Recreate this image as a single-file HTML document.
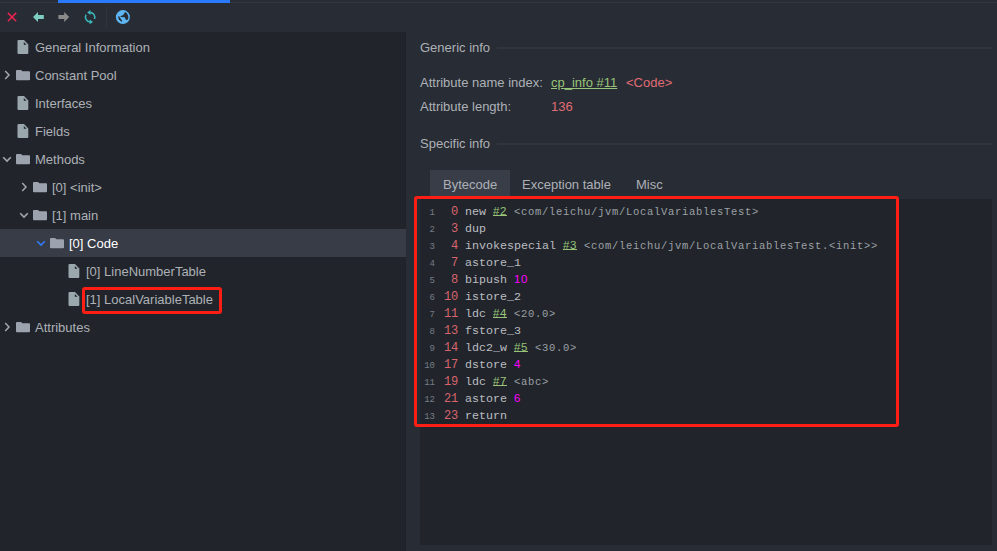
<!DOCTYPE html>
<html><head><meta charset="utf-8">
<style>
*{margin:0;padding:0;box-sizing:border-box}
html,body{width:997px;height:551px;overflow:hidden;background:#282c34;font-family:"Liberation Sans",sans-serif;font-size:13px;color:#adb1b7}
.abs{position:absolute}
#toolbar{left:0;top:0;width:997px;height:32px;background:#282c34}
#topline{left:0;top:2px;width:997px;height:1px;background:#32363f}
#bluebar{left:58px;top:0;width:172px;height:3px;background:#2a7aff}
#tree{left:0;top:32px;width:406px;height:519px;background:#21252b}
#divider{left:405px;top:32px;width:1px;height:519px;background:#1e2127}
.sel-row{left:0;top:229px;width:406px;height:28px;background:#373c47}
.txt{position:absolute;white-space:pre;line-height:16px}
.txt.sel{color:#ffffff}
.right{left:406px;top:32px;width:591px;height:519px;background:#282c34}
#code{left:420px;top:199px;width:572px;height:346px;background:#21252b}
.hdrline{position:absolute;height:2px;background:#31353f}
.tab{left:430px;top:170px;width:80px;height:27px;background:#383d48}
.cl{position:absolute;left:420px;white-space:pre;font-family:"Liberation Mono",monospace;font-size:11.67px;line-height:17px;color:#bbbdc1}
.cl .ln{display:inline-block;width:15px;text-align:right;font-size:9px;color:#767c85;margin-right:9px}
.off{color:#d9646d;font-size:12px;letter-spacing:-0.2px}
.cl span{line-height:0}
.ins{color:#bbbdc1}
.ref{color:#98c379;text-decoration:underline;text-underline-offset:0px;font-family:"Liberation Sans",sans-serif;font-size:11.5px;letter-spacing:0.6px}
.cmt{color:#9ca0a6;font-size:10.5px;letter-spacing:0.7px}
.num{color:#ff00ff;font-family:"Liberation Sans",sans-serif;font-size:11.5px;letter-spacing:0.6px}
.redbox{position:absolute;border:3px solid #ff1e14;border-radius:3px}
</style></head><body>
<div id="toolbar" class="abs"></div>
<div id="topline" class="abs"></div>
<div id="bluebar" class="abs"></div>
<svg class="abs" style="left:0;top:0" width="140" height="32" viewBox="0 0 140 32">
 <path d="M7.9 12.9 L16.2 21.2 M16.2 12.9 L7.9 21.2" stroke="#ec2450" stroke-width="1.5"/>
 <path d="M33 17 L38 12 V15.1 H43.8 V19 H38 V22z" fill="#7ecdc2"/>
 <path d="M69.2 17 L64.2 12 V15.1 H58.4 V19 H64.2 V22z" fill="#8a8a8a"/>
 <path d="M90.1 12.5 A4.7 4.7 0 0 1 94.42 19.04" fill="none" stroke="#3bbabd" stroke-width="1.5"/>
 <path d="M86.11 14.71 A4.7 4.7 0 0 0 90.1 21.9" fill="none" stroke="#3bbabd" stroke-width="1.5"/>
 <path d="M87.2 12.5 L90.5 10.1 L90.5 14.9z" fill="#3bbabd"/>
 <path d="M93 21.9 L89.7 19.5 L89.7 24.3z" fill="#3bbabd"/>
 <rect x="106" y="7" width="1" height="20" fill="#31353e"/>
 <circle cx="122.9" cy="17.1" r="7" fill="#5db6f3"/>
 <path d="M125.2 12 C126.8 12.8 128.2 14.8 128.4 17.2 C128.4 18.3 128 19.3 127.5 19.8 L126.2 19.9 C125.6 19.5 125.2 18.8 125 18 L124.8 17.2 L121 17 L120.3 16.2 L123.2 15 L124.1 13.5z" fill="#282c34"/>
 <path d="M118 16.2 L119.3 16.4 L122.2 20.9 L121.3 21.7 L118.8 19.2z" fill="#282c34"/>
</svg>
<div id="tree" class="abs"></div>
<div id="divider" class="abs"></div>
<div class="sel-row abs"></div>
<svg class="abs" style="left:0;top:0" width="406" height="551">
<path d="M18.5 40.1 h5.5 l4.3 4.4 v8.4 a1 1 0 0 1 -1 1 h-8.8 a1 1 0 0 1 -1 -1 v-11.8 a1 1 0 0 1 1 -1z" fill="#9aa8ae"/>
<path d="M23.8 41.9 v2.8 h2.8z" fill="#21252b"/>
<path d="M5.2 71.1 L9 75 L5.2 78.9" fill="none" stroke="#a3a7ae" stroke-width="1.5"/>
<path d="M17 69.9 h4 l1.4 1.3 h6.6 a1 1 0 0 1 1 1 v7.1 a1 1 0 0 1 -1 1 h-12 a1 1 0 0 1 -1 -1 v-8.4 a1 1 0 0 1 1 -1z" fill="#9da3ae"/>
<path d="M18.5 96.1 h5.5 l4.3 4.4 v8.4 a1 1 0 0 1 -1 1 h-8.8 a1 1 0 0 1 -1 -1 v-11.8 a1 1 0 0 1 1 -1z" fill="#9aa8ae"/>
<path d="M23.8 97.89999999999999 v2.8 h2.8z" fill="#21252b"/>
<path d="M18.5 124.1 h5.5 l4.3 4.4 v8.4 a1 1 0 0 1 -1 1 h-8.8 a1 1 0 0 1 -1 -1 v-11.8 a1 1 0 0 1 1 -1z" fill="#9aa8ae"/>
<path d="M23.8 125.89999999999999 v2.8 h2.8z" fill="#21252b"/>
<path d="M3.2 157.2 L7 161 L10.8 157.2" fill="none" stroke="#a3a7ae" stroke-width="1.6"/>
<path d="M17 153.9 h4 l1.4 1.3 h6.6 a1 1 0 0 1 1 1 v7.1 a1 1 0 0 1 -1 1 h-12 a1 1 0 0 1 -1 -1 v-8.4 a1 1 0 0 1 1 -1z" fill="#9da3ae"/>
<path d="M22.2 183.1 L26 187 L22.2 190.9" fill="none" stroke="#a3a7ae" stroke-width="1.5"/>
<path d="M34 181.9 h4 l1.4 1.3 h6.6 a1 1 0 0 1 1 1 v7.1 a1 1 0 0 1 -1 1 h-12 a1 1 0 0 1 -1 -1 v-8.4 a1 1 0 0 1 1 -1z" fill="#9da3ae"/>
<path d="M20.2 213.2 L24 217 L27.8 213.2" fill="none" stroke="#a3a7ae" stroke-width="1.6"/>
<path d="M34 209.9 h4 l1.4 1.3 h6.6 a1 1 0 0 1 1 1 v7.1 a1 1 0 0 1 -1 1 h-12 a1 1 0 0 1 -1 -1 v-8.4 a1 1 0 0 1 1 -1z" fill="#9da3ae"/>
<path d="M37.2 241.2 L41 245 L44.8 241.2" fill="none" stroke="#2f7df6" stroke-width="1.6"/>
<path d="M51 237.9 h4 l1.4 1.3 h6.6 a1 1 0 0 1 1 1 v7.1 a1 1 0 0 1 -1 1 h-12 a1 1 0 0 1 -1 -1 v-8.4 a1 1 0 0 1 1 -1z" fill="#9da3ae"/>
<path d="M69.5 264.1 h5.5 l4.3 4.4 v8.4 a1 1 0 0 1 -1 1 h-8.8 a1 1 0 0 1 -1 -1 v-11.8 a1 1 0 0 1 1 -1z" fill="#9aa8ae"/>
<path d="M74.8 265.90000000000003 v2.8 h2.8z" fill="#21252b"/>
<path d="M69.5 292.1 h5.5 l4.3 4.4 v8.4 a1 1 0 0 1 -1 1 h-8.8 a1 1 0 0 1 -1 -1 v-11.8 a1 1 0 0 1 1 -1z" fill="#9aa8ae"/>
<path d="M74.8 293.90000000000003 v2.8 h2.8z" fill="#21252b"/>
<path d="M5.2 323.1 L9 327 L5.2 330.9" fill="none" stroke="#a3a7ae" stroke-width="1.5"/>
<path d="M17 321.9 h4 l1.4 1.3 h6.6 a1 1 0 0 1 1 1 v7.1 a1 1 0 0 1 -1 1 h-12 a1 1 0 0 1 -1 -1 v-8.4 a1 1 0 0 1 1 -1z" fill="#9da3ae"/>
</svg>
<div class="txt" style="left:35px;top:40px">General Information</div>
<div class="txt" style="left:35px;top:68px">Constant Pool</div>
<div class="txt" style="left:35px;top:96px">Interfaces</div>
<div class="txt" style="left:35px;top:124px">Fields</div>
<div class="txt" style="left:35px;top:152px">Methods</div>
<div class="txt" style="left:52px;top:180px">[0] &lt;init&gt;</div>
<div class="txt" style="left:52px;top:208px">[1] main</div>
<div class="txt sel" style="left:69px;top:236px">[0] Code</div>
<div class="txt" style="left:86px;top:264px">[0] LineNumberTable</div>
<div class="txt" style="left:86px;top:292px">[1] LocalVariableTable</div>
<div class="txt" style="left:35px;top:320px">Attributes</div>
<div class="redbox" style="left:82px;top:287px;width:140px;height:27px"></div>
<div class="right abs"></div>
<div class="txt" style="left:420px;top:40px">Generic info</div>
<div class="hdrline" style="left:497px;top:47px;width:495px"></div>
<div class="txt" style="left:420px;top:75px">Attribute name index:</div>
<div class="txt" style="left:551px;top:75px;color:#98c379;text-decoration:underline">cp_info #11</div>
<div class="txt" style="left:626px;top:75px;color:#e06c75">&lt;Code&gt;</div>
<div class="txt" style="left:420px;top:99px">Attribute length:</div>
<div class="txt" style="left:551px;top:99px;color:#e06c75">136</div>
<div class="txt" style="left:420px;top:136px">Specific info</div>
<div class="hdrline" style="left:497px;top:143px;width:495px"></div>
<div class="tab abs"></div>
<div class="txt" style="left:443px;top:177px">Bytecode</div>
<div class="txt" style="left:522px;top:177px">Exception table</div>
<div class="txt" style="left:636px;top:177px">Misc</div>
<div id="code" class="abs"></div>
<div class="cl" style="top:204px"><span class="ln">1</span><span class="off"> 0</span> <span class="ins">new</span> <span class="ref">#2</span> <span class="cmt">&lt;com/leichu/jvm/LocalVariablesTest&gt;</span></div>
<div class="cl" style="top:221px"><span class="ln">2</span><span class="off"> 3</span> <span class="ins">dup</span></div>
<div class="cl" style="top:238px"><span class="ln">3</span><span class="off"> 4</span> <span class="ins">invokespecial</span> <span class="ref">#3</span> <span class="cmt">&lt;com/leichu/jvm/LocalVariablesTest.&lt;init&gt;&gt;</span></div>
<div class="cl" style="top:255px"><span class="ln">4</span><span class="off"> 7</span> <span class="ins">astore_1</span></div>
<div class="cl" style="top:272px"><span class="ln">5</span><span class="off"> 8</span> <span class="ins">bipush</span> <span class="num">10</span></div>
<div class="cl" style="top:289px"><span class="ln">6</span><span class="off">10</span> <span class="ins">istore_2</span></div>
<div class="cl" style="top:306px"><span class="ln">7</span><span class="off">11</span> <span class="ins">ldc</span> <span class="ref">#4</span> <span class="cmt">&lt;20.0&gt;</span></div>
<div class="cl" style="top:323px"><span class="ln">8</span><span class="off">13</span> <span class="ins">fstore_3</span></div>
<div class="cl" style="top:340px"><span class="ln">9</span><span class="off">14</span> <span class="ins">ldc2_w</span> <span class="ref">#5</span> <span class="cmt">&lt;30.0&gt;</span></div>
<div class="cl" style="top:357px"><span class="ln">10</span><span class="off">17</span> <span class="ins">dstore</span> <span class="num">4</span></div>
<div class="cl" style="top:374px"><span class="ln">11</span><span class="off">19</span> <span class="ins">ldc</span> <span class="ref">#7</span> <span class="cmt">&lt;abc&gt;</span></div>
<div class="cl" style="top:391px"><span class="ln">12</span><span class="off">21</span> <span class="ins">astore</span> <span class="num">6</span></div>
<div class="cl" style="top:408px"><span class="ln">13</span><span class="off">23</span> <span class="ins">return</span></div>
<div class="redbox" style="left:414px;top:196px;width:485px;height:231px"></div>
</body></html>
